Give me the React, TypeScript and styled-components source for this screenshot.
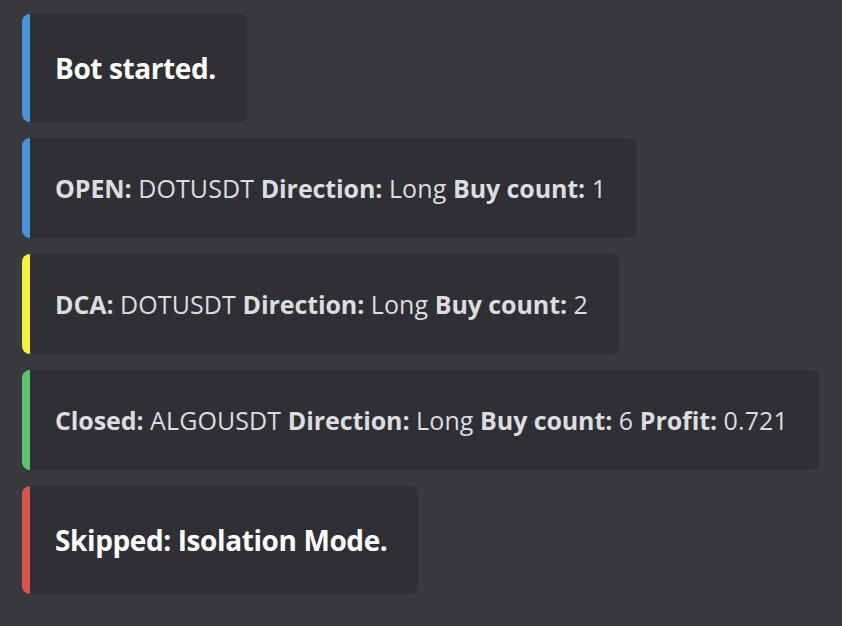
import styled, { createGlobalStyle } from 'styled-components'

const GlobalStyle = createGlobalStyle`
  html, body {
    margin: 0;
    padding: 0;
    background: #393a40;
  }
  body {
    font-family: "Open Sans", "Noto Sans", sans-serif;
  }
`

const Feed = styled.div`
  min-height: 626px;
  box-sizing: border-box;
  padding: 14px 22px;
  display: flex;
  flex-direction: column;
  align-items: flex-start;
  gap: 16px;
`

const Embed = styled.div<{ $color: string }>`
  box-sizing: border-box;
  background: #2f3035;
  border-left: 8px solid ${(p) => p.$color};
  border-radius: 8px;
  padding: 32px 31px 32px 25px;
`

const Title = styled.div`
  color: #ffffff;
  font-size: 28px;
  font-weight: 700;
  line-height: 44px;
  letter-spacing: -0.4px;
`

const Description = styled.div`
  color: #dcddde;
  font-size: 25px;
  font-weight: 400;
  line-height: 36px;
  letter-spacing: 0.1px;
  white-space: nowrap;
`

const Label = styled.b`
  font-weight: 700;
  letter-spacing: -0.1px;
`

type Field = [string, string]

const colors = {
  blue: '#4a94dc',
  yellow: '#f5f03f',
  green: '#5dc471',
  red: '#d7584a',
}

function Fields({ items }: { items: Field[] }) {
  return (
    <Description>
      {items.map(([k, v], i) => (
        <span key={k}>
          {i > 0 && ' '}
          <Label>{k}:</Label> {v}
        </span>
      ))}
    </Description>
  )
}

function App() {
  return (
    <>
      <GlobalStyle />
      <Feed>
        <Embed $color={colors.blue}>
          <Title>Bot started.</Title>
        </Embed>
        <Embed $color={colors.blue}>
          <Fields items={[['OPEN', 'DOTUSDT'], ['Direction', 'Long'], ['Buy count', '1']]} />
        </Embed>
        <Embed $color={colors.yellow}>
          <Fields items={[['DCA', 'DOTUSDT'], ['Direction', 'Long'], ['Buy count', '2']]} />
        </Embed>
        <Embed $color={colors.green}>
          <Fields
            items={[
              ['Closed', 'ALGOUSDT'],
              ['Direction', 'Long'],
              ['Buy count', '6'],
              ['Profit', '0.721'],
            ]}
          />
        </Embed>
        <Embed $color={colors.red}>
          <Title>Skipped: Isolation Mode.</Title>
        </Embed>
      </Feed>
    </>
  )
}

export default App
